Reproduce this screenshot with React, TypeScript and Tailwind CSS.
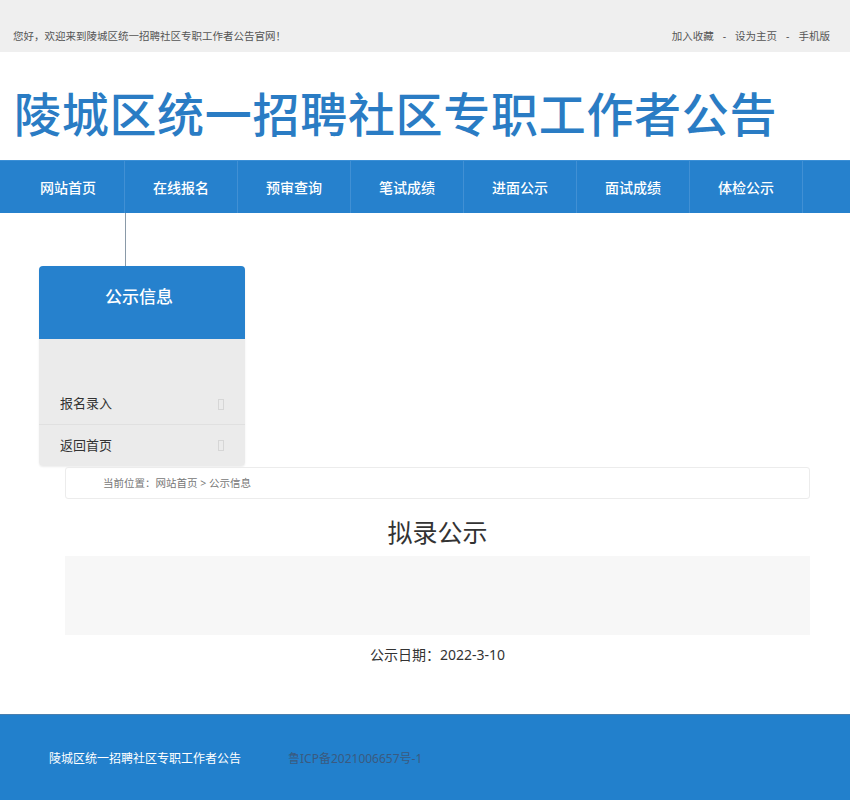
import React from 'react';

const navItems = ['网站首页', '在线报名', '预审查询', '笔试成绩', '进面公示', '面试成绩', '体检公示'];
const sideLinks = ['报名录入', '返回首页'];

const font = { fontFamily: '"Noto Sans", "Noto Sans CJK SC", sans-serif' };

export default function App() {
    return (
        <div className="w-[850px] min-h-[800px] bg-white" style={font}>
            {/* top bar */}
            <div className="h-[52px] bg-[#efefef] flex items-end justify-between px-[13px] pb-[7px] text-[10.5px] text-[#555]">
                <span>您好，欢迎来到陵城区统一招聘社区专职工作者公告官网！</span>
                <div className="flex gap-[9px] pr-[7px]">
                    <span>加入收藏</span>
                    <span>-</span>
                    <span>设为主页</span>
                    <span>-</span>
                    <span>手机版</span>
                </div>
            </div>

            {/* header */}
            <div className="h-[108px] flex items-center pl-[14px] pt-[16px]">
                <h1 className="text-[47px] font-medium text-[#2a7cc4] tracking-[0.7px] leading-none">
                    陵城区统一招聘社区专职工作者公告
                </h1>
            </div>

            {/* nav */}
            <div className="h-[53px] bg-[#2681cd] border-t border-[#3b8fd6] flex pl-[12px]">
                {navItems.map((item) => (
                    <div
                        key={item}
                        className="w-[113px] h-full flex items-center justify-center text-white text-[14px] font-medium border-r border-[#4190d4]"
                    >
                        {item}
                    </div>
                ))}
            </div>

            {/* line to sidebar */}
            <div className="ml-[125px] w-px h-[53px] bg-[#8a9aa8]" />

            {/* sidebar */}
            <div className="ml-[39px] w-[206px] rounded-[4px] overflow-hidden shadow-[0_1px_2px_rgba(0,0,0,0.08)]">
                <div className="h-[73px] bg-[#2681cd] flex justify-center pt-[18px] pr-[6px] text-white text-[17px] font-medium">
                    公示信息
                </div>
                <div className="bg-[#ebebeb] pt-[45px]">
                    {sideLinks.map((link, i) => (
                        <div
                            key={link}
                            className={`h-[41px] flex items-center justify-between pl-[21px] pr-[21px] text-[13px] text-[#333] ${
                                i === 0 ? 'border-b border-[#e0e0e0]' : ''
                            }`}
                        >
                            <span>{link}</span>
                            <span className="w-[6px] h-[11px] border border-[#d6d6d6]" />
                        </div>
                    ))}
                </div>
            </div>

            {/* breadcrumb */}
            <div className="mx-[65px] mt-px w-[745px] h-[32px] border border-[#ececec] rounded-[3px] flex items-center pl-[37px] pt-[2px] text-[10.5px] text-[#777]">
                当前位置：网站首页 &gt; 公示信息
            </div>

            {/* content */}
            <div className="w-[745px] ml-[65px] flex flex-col items-center">
                <h2 className="mt-[17px] text-[25px] text-[#333] leading-[32px]">拟录公示</h2>
                <div className="mt-[8px] w-full h-[79px] bg-[#f7f7f7]" />
                <div className="mt-[9px] text-[14px] text-[#333]">公示日期：2022-3-10</div>
            </div>

            {/* footer */}
            <div className="mt-[49px] h-[86px] bg-[#2280cc] border-t border-[#4a7fae] flex items-start pl-[49px] pt-[35px] text-[12px]">
                <span className="text-white">陵城区统一招聘社区专职工作者公告</span>
                <span className="ml-[47px] text-[#3a5a80]">鲁ICP备2021006657号-1</span>
            </div>
        </div>
    );
}
